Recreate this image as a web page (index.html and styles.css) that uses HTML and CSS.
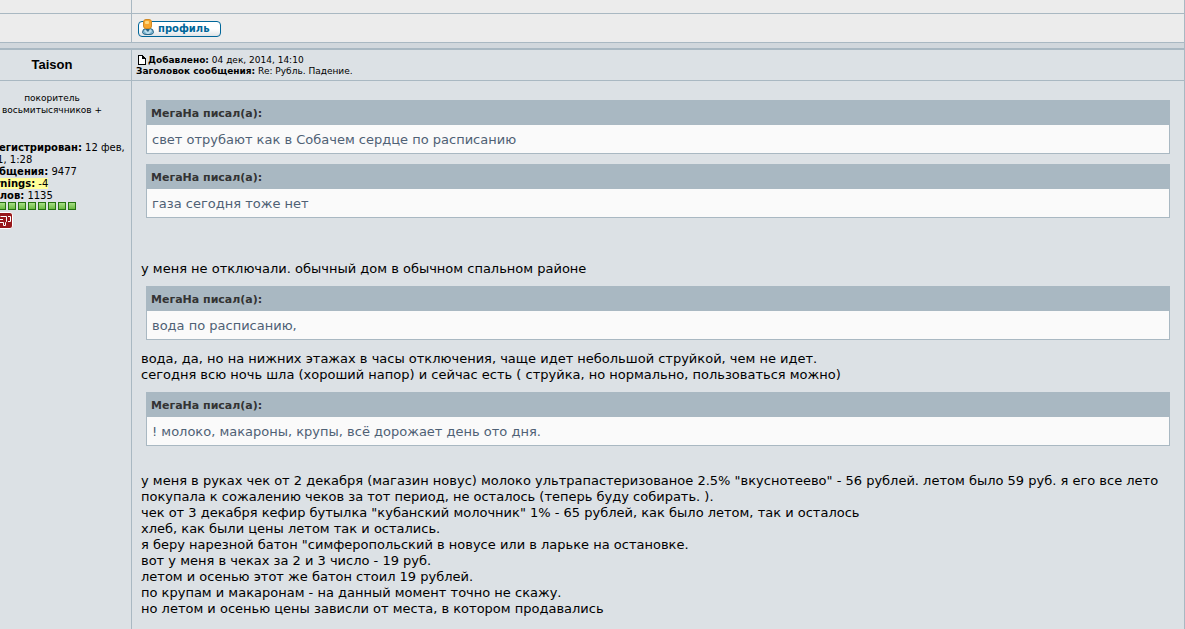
FILE: index.html
```html
<!DOCTYPE html>
<html lang="ru">
<head>
<meta charset="utf-8">
<title>Рубль. Падение.</title>
<link rel="stylesheet" href="styles.css">
</head>
<body>
<main class="forum">
  <div class="post-grid previous">
    <div class="cell"></div>
    <div class="cell"></div>
    <div class="cell"></div>
    <div class="cell actions">
      <button class="profile" type="button">
        <svg class="person" width="14" height="18" viewBox="0 0 14 18" aria-hidden="true">
          <path d="M1.500 14.500Q1.500 10.500 5 10.500H9Q12.500 10.500 12.500 14.500Q12 16.500 9 16.500H5Q2 16.500 1.500 14.500Z" fill="#78b2cf" stroke="#2a6585"/>
          <path d="M3 13L6 16H8L11 13L9 11H5Z" fill="#b9dcec"/>
          <path d="M4 11L7 14L9 11Z" fill="#2a6585"/>
          <rect x="2.500" y="1.500" width="8" height="9" rx="2.500" fill="#f7a52e" stroke="#cf8a26"/>
          <rect x="4" y="3" width="4" height="3" rx="1" fill="#ffd980"/>
        </svg>
        <span>профиль</span>
      </button>
    </div>
  </div>
  <div class="spacer"></div>
  <article class="post-grid current">
    <div class="cell author">Taison</div>
    <header class="cell meta">
      <div class="meta-line">
        <svg class="page-icon" width="9" height="10" viewBox="0 0 9 10" aria-hidden="true"><path d="M1.500 .5H5L8.500 4V9.500H1.500Z" fill="#fff"/><path d="M1 0H6V1H7V2H8V3H9V10H1ZM2 1V9H8V4H5V1Z" fill="#000" fill-rule="evenodd"/></svg>
        <span><b>Добавлено:</b> 04 дек, 2014, 14:10</span>
      </div>
      <div class="meta-line"><span><b>Заголовок сообщения:</b> Re: Рубль. Падение.</span></div>
    </header>
    <aside class="cell details">
      <p class="rank">покоритель восьмитысячников +</p>
      <div class="stats">
        <div><b>Зарегистрирован:</b> 12 фев, 2011, 1:28</div>
        <div><b>Сообщения:</b> 9477</div>
        <div><mark><b>Warnings:</b> -4</mark></div>
        <div><b>Баллов:</b> 1135</div>
      </div>
      <div class="power"><i></i><i></i><i></i><i></i><i></i><i></i><i></i><i></i><i></i><i></i></div>
      <button class="dislike" type="button" aria-label="-">
        <svg width="14" height="13" viewBox="0 0 14 13" aria-hidden="true"><path d="M2.500 2.500H8.500V7.500L7.500 8.500V11.500H5.500V8.500H1.500V5.500H4M2 5.500H5M10 2.500H12.500V7.500H10" fill="none" stroke="#fff"/></svg>
      </button>
    </aside>
    <div class="cell content">
      <blockquote><cite>МегаНа писал(а):</cite><p>свет отрубают как в Собачем сердце по расписанию</p></blockquote>
      <blockquote><cite>МегаНа писал(а):</cite><p>газа сегодня тоже нет</p></blockquote>
      <p class="text after-gap">у меня не отключали. обычный дом в обычном спальном районе</p>
      <blockquote><cite>МегаНа писал(а):</cite><p>вода по расписанию,</p></blockquote>
      <p class="text">вода, да, но на нижних этажах в часы отключения, чаще идет небольшой струйкой, чем не идет.<br>сегодня всю ночь шла (хороший напор) и сейчас есть ( струйка, но нормально, пользоваться можно)</p>
      <blockquote><cite>МегаНа писал(а):</cite><p>! молоко, макароны, крупы, всё дорожает день ото дня.</p></blockquote>
      <p class="text after-line">у меня в руках чек от 2 декабря (магазин новус) молоко ультрапастеризованое 2.5% "вкуснотеево" - 56 рублей. летом было 59 руб. я его все лето покупала к сожалению чеков за тот период, не осталось (теперь буду собирать. ).<br>чек от 3 декабря кефир бутылка "кубанский молочник" 1% - 65 рублей, как было летом, так и осталось<br>хлеб, как были цены летом так и остались.<br>я беру нарезной батон "симферопольский в новусе или в ларьке на остановке.<br>вот у меня в чеках за 2 и 3 число - 19 руб.<br>летом и осенью этот же батон стоил 19 рублей.<br>по крупам и макаронам - на данный момент точно не скажу.<br>но летом и осенью цены зависли от места, в котором продавались</p>
    </div>
  </article>
</main>
</body>
</html>
```
FILE: styles.css
```css
* { box-sizing: border-box; }
body {
  margin: 0;
  overflow: hidden;
  background: #dce1e5;
  color: #000;
  font-family: Verdana, "DejaVu Sans", sans-serif;
  font-size: 13px;
}
p, blockquote { margin: 0; }
/* The author column runs off the left edge of the window. */
.forum {
  display: flex;
  flex-direction: column;
  min-height: 100vh;
  margin-left: -27px;
  border-right: 1px solid #a9b8c2;
}
.post-grid {
  display: grid;
  grid-template-columns: 159px 1fr;
}
.cell { border-bottom: 1px solid #a9b8c2; }
.cell:nth-child(odd) { border-right: 1px solid #a9b8c2; }
.previous {
  grid-template-rows: 14px 29px;
  background: #ececec;
}
.actions { padding: 7px 6px 5px; }
.profile {
  display: flex;
  align-items: center;
  gap: 3px;
  height: 16px;
  width: 83px;
  padding: 0 2px;
  border: 1px solid #006699;
  border-radius: 4px;
  background: linear-gradient(#fff 50%, #dfe3e6);
  color: #006699;
  font: bold 10px/14px Verdana, "DejaVu Sans", sans-serif;
}
.person { flex: none; margin-bottom: 5px; }
.spacer {
  height: 7px;
  background: #d1d7dc;
  border-bottom: 2px solid #a9b8c2;
}
.current {
  flex: 1;
  grid-template-rows: 31px 1fr;
}
.author {
  padding-top: 7px;
  text-align: center;
  font: bold 13px/16px Arial, "Liberation Sans", sans-serif;
}
.meta {
  padding: 5px 4px 3px;
  font-size: 9px;
  line-height: 11px;
}
.meta-line { display: flex; gap: 2px; }
.page-icon { flex: none; margin-left: 1px; }
.details, .content { border-bottom: 0; }
.details {
  padding: 11px 5px;
  font-size: 10px;
  line-height: 12px;
}
.rank {
  margin-bottom: 26px;
  text-align: center;
  font-size: 9px;
}
mark { background: #ffff99; color: inherit; }
.power {
  display: flex;
  gap: 2px;
}
.power i {
  width: 8px;
  height: 8px;
  border: 1px solid #26720f;
  background: linear-gradient(#a6dd83, #6cba43);
}
.dislike {
  display: flex;
  align-items: center;
  justify-content: flex-end;
  width: 35px;
  height: 17px;
  margin-top: 2px;
  padding: 0;
  border: 1px solid #fff;
  border-radius: 3px;
  background: #98171b;
}
.content {
  padding: 19px 9px 12px;
  line-height: 16px;
}
blockquote { margin: 0 5px 10px; }
cite {
  display: block;
  padding: 6px 5px 4px;
  background: #a9b8c2;
  color: #333;
  font-style: normal;
  font-weight: bold;
  font-size: 11px;
  line-height: 15px;
}
blockquote p {
  padding: 7px 5px 5px;
  border: 1px solid #a9b8c2;
  border-top: 0;
  background: #fafafa;
  color: #4f6175;
}
.text { padding-top: 1px; margin-bottom: 9px; }
.after-gap { margin-top: 42px; }
.after-line { margin-top: 26px; }
```
